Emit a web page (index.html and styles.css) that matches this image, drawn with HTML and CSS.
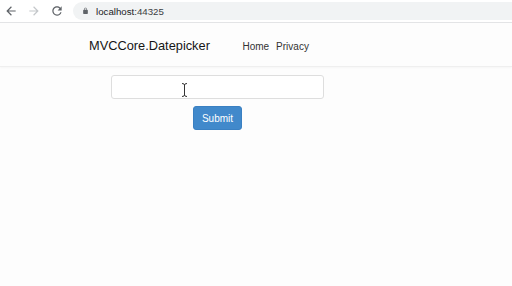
FILE: index.html
```html
<!DOCTYPE html>
<html lang="en">

<head>
    <meta charset="UTF-8">
    <meta name="viewport" content="width=device-width, initial-scale=1.0">
    <title>MVCCore.Datepicker</title>
    <link rel="stylesheet" href="styles.css">
</head>

<body>
    <!-- barra del navegador -->
    <div class="toolbar">
        <svg class="tb-icon back" viewBox="0 0 24 24">
            <path d="M20 11H7.83l5.59-5.59L12 4l-8 8 8 8 1.41-1.41L7.83 13H20v-2z" />
        </svg>
        <svg class="tb-icon forward" viewBox="0 0 24 24">
            <path d="M4 11h12.17l-5.59-5.59L12 4l8 8-8 8-1.41-1.41L16.17 13H4v-2z" />
        </svg>
        <svg class="tb-icon reload" viewBox="0 0 24 24">
            <path d="M17.65 6.35C16.2 4.9 14.21 4 12 4c-4.42 0-7.99 3.58-7.99 8s3.57 8 7.99 8c3.73 0 6.84-2.55 7.730-6h-2.08c-.82 2.33-3.04 4-5.65 4-3.31 0-6-2.69-6-6s2.69-6 6-6c1.66 0 3.14.69 4.22 1.78L13 11h7V4l-2.35 2.35z" />
        </svg>
        <div class="omnibox">
            <svg class="lock" viewBox="0 0 24 24">
                <path d="M18 8h-1V6c0-2.76-2.24-5-5-5S7 3.24 7 6v2H6c-1.1 0-2 .9-2 2v10c0 1.1.9 2 2 2h12c1.1 0 2-.9 2-2V10c0-1.1-.9-2-2-2zm-2.9 0H8.9V6c0-1.710 1.39-3.1 3.1-3.1 1.71 0 3.1 1.39 3.1 3.1v2z" />
            </svg>
            <span class="url">localhost<span class="port">:44325</span></span>
        </div>
    </div>

    <header class="navbar">
        <div class="container nav-row">
            <a class="brand" href="#">MVCCore.Datepicker</a>
            <ul class="nav-links">
                <li><a href="#">Home</a></li>
                <li><a href="#">Privacy</a></li>
            </ul>
        </div>
    </header>

    <main class="container">
        <form class="date-form">
            <div class="field">
                <input type="text" class="date-input">
                <!-- cursor de texto sobre el campo -->
                <svg class="ibeam" viewBox="0 0 7 14">
                    <path d="M1 .5Q3.5 .5 3.5 2Q3.5 .5 6 .5M3.5 2V12M1 13.5Q3.5 13.5 3.5 12Q3.5 13.5 6 13.5" />
                </svg>
            </div>
            <button type="button" class="btn-primary">Submit</button>
        </form>
    </main>
</body>

</html>
```

FILE: styles.css
```css
body {
    margin: 0;
    font-family: "Liberation Sans", Arial, sans-serif;
    background-color: #fdfdfd;
    color: #212529;
    height: 100vh;
    overflow: hidden;
}

.toolbar {
    display: flex;
    align-items: center;
    height: 22px;
    background-color: #ffffff;
    border-bottom: 1px solid #e3e4e6;
    overflow: hidden;
}

.tb-icon {
    width: 14px;
    height: 14px;
    fill: #5f6368;
    flex: none;
}

.tb-icon.back {
    margin-left: 4px;
}

.tb-icon.forward {
    margin-left: 9px;
    fill: #c4c7ca;
}

.tb-icon.reload {
    margin-left: 9px;
}

.omnibox {
    flex: 1;
    display: flex;
    align-items: center;
    height: 18px;
    margin-left: 9px;
    margin-right: -30px;
    padding-left: 9px;
    border-radius: 9px;
    background-color: #f1f3f4;
}

.lock {
    width: 7px;
    height: 8px;
    fill: #5f6368;
    flex: none;
}

.url {
    margin-left: 7px;
    font-size: 9.7px;
    color: #202124;
}

.port {
    color: #3c4043;
}

.navbar {
    height: 43px;
    border-bottom: 1px solid #efefef;
    box-shadow: 0 1px 2px rgba(0, 0, 0, 0.03);
}

.container {
    padding-left: 89px;
}

.nav-row {
    display: flex;
    align-items: center;
    height: 100%;
    padding-top: 1px;
    box-sizing: border-box;
}

.brand {
    font-size: 12.8px;
    color: #151515;
    text-decoration: none;
}

.nav-links {
    display: flex;
    gap: 7px;
    list-style: none;
    margin: 0 0 0 32.5px;
    padding: 0;
}

.nav-links a {
    font-size: 10px;
    color: #333333;
    text-decoration: none;
}

.date-form {
    display: flex;
    flex-direction: column;
    align-items: center;
    width: 257px;
    margin: 0;
    padding-top: 8px;
}

.field {
    position: relative;
}

.date-input {
    display: block;
    width: 213px;
    height: 24px;
    box-sizing: border-box;
    border: 1px solid #dedede;
    border-radius: 3px;
    background-color: #ffffff;
    margin: 0;
}

.ibeam {
    position: absolute;
    left: 70px;
    top: 8px;
    width: 7px;
    height: 14px;
    fill: none;
    stroke: #333333;
    stroke-width: 1;
}

.btn-primary {
    margin-top: 7px;
    width: 49px;
    height: 24px;
    padding: 0;
    border: 1px solid #3a80c2;
    border-radius: 3px;
    background-color: #4189cb;
    color: #ffffff;
    font-family: "Liberation Sans", Arial, sans-serif;
    font-size: 10px;
}
```
